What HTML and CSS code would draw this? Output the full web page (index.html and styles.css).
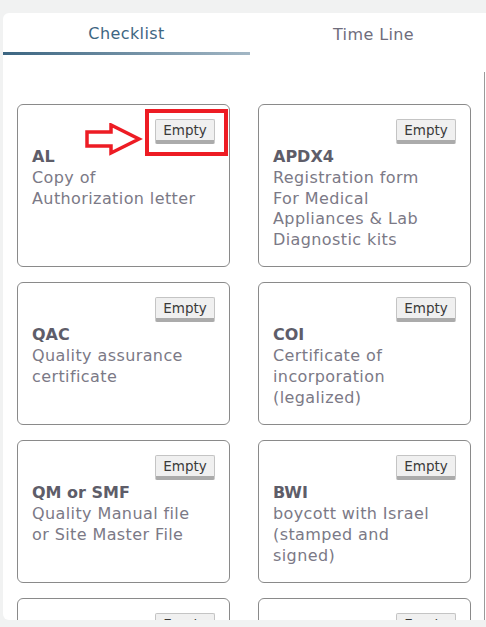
FILE: index.html
```html
<!DOCTYPE html>
<html>
<head>
<meta charset="utf-8">
<link rel="stylesheet" href="styles.css">
</head>
<body>
<div class="panel">
  <div class="tabs">
    <div class="tab active">Checklist</div>
    <div class="tab">Time Line</div>
  </div>
  <div class="scroll">
    <div class="grid">
      <div class="card annotated">
        <div class="btn-row"><span class="btn">Empty</span></div>
        <div class="title">AL</div>
        <div class="desc">Copy of<br>Authorization letter</div>
        <div class="redbox"></div>
        <svg class="arrow" width="58" height="33" viewBox="0 0 58 33"><path d="M2 9 H26 V2 L54 16 L26 30 V23 H2 Z" fill="none" stroke="#ed1c24" stroke-width="3.5" stroke-linejoin="miter"/></svg>
      </div>
      <div class="card">
        <div class="btn-row"><span class="btn">Empty</span></div>
        <div class="title">APDX4</div>
        <div class="desc">Registration form<br>For Medical<br>Appliances &amp; Lab<br>Diagnostic kits</div>
      </div>
      <div class="card">
        <div class="btn-row"><span class="btn">Empty</span></div>
        <div class="title">QAC</div>
        <div class="desc">Quality assurance<br>certificate</div>
      </div>
      <div class="card">
        <div class="btn-row"><span class="btn">Empty</span></div>
        <div class="title">COI</div>
        <div class="desc">Certificate of<br>incorporation<br>(legalized)</div>
      </div>
      <div class="card">
        <div class="btn-row"><span class="btn">Empty</span></div>
        <div class="title">QM or SMF</div>
        <div class="desc">Quality Manual file<br>or Site Master File</div>
      </div>
      <div class="card">
        <div class="btn-row"><span class="btn">Empty</span></div>
        <div class="title">BWI</div>
        <div class="desc">boycott with Israel<br>(stamped and<br>signed)</div>
      </div>
      <div class="card">
        <div class="btn-row"><span class="btn">Empty</span></div>
        <div class="title">MOH</div>
        <div class="desc">Ministry of Health<br>license</div>
      </div>
      <div class="card">
        <div class="btn-row"><span class="btn">Empty</span></div>
        <div class="title">FSC</div>
        <div class="desc">Free Sale<br>Certificate</div>
      </div>
    </div>
  </div>
</div>
</body>
</html>
```
FILE: styles.css
```css
* { box-sizing: border-box; }
html, body { margin: 0; padding: 0; }
body {
  background: #f1f2f2;
  font-family: "DejaVu Sans", sans-serif;
  height: 627px;
  overflow: hidden;
}
.panel {
  margin: 13px 0 0 3px;
  width: 490px;
  height: 607px;
  background: #fff;
  border-radius: 6px 0 0 6px;
  overflow: hidden;
  display: flex;
  flex-direction: column;
}
.tabs {
  display: grid;
  grid-template-columns: 247px 247px;
  height: 42px;
  flex: none;
}
.tab {
  display: flex;
  align-items: center;
  justify-content: center;
  padding-top: 1px;
  font-size: 16px;
  letter-spacing: 0.4px;
  color: #6f6d7c;
}
.tab.active {
  color: #3e6682;
  border-bottom: 3px solid transparent;
  border-image: linear-gradient(to right, #3b6581, #a3b7c5) 1;
}
.scroll {
  margin-top: 17px;
  flex: 1;
  width: 482px;
  border-right: 1px solid #9a9a9a;
  padding: 32px 0 0 14px;
  overflow: hidden;
}
.grid {
  display: grid;
  grid-template-columns: 213px 213px;
  column-gap: 28px;
  row-gap: 15px;
}
.card {
  position: relative;
  border: 1px solid #8a8a8a;
  border-radius: 6px;
  padding: 14px 14px 15.5px 14px;
}
.btn-row {
  display: flex;
  justify-content: flex-end;
  margin-bottom: 3px;
}
.btn {
  display: inline-block;
  height: 25px;
  width: 60px;
  text-align: center;
  font-size: 13.5px;
  line-height: 20px;
  color: #3a3a3a;
  background: #f0f0f0;
  border: 1px solid #c4c4c4;
  border-bottom: 4px solid #ababab;
  border-radius: 2px;
}
.title {
  font-size: 16px;
  font-weight: bold;
  line-height: 20.8px;
  color: #5e5d69;
}
.desc {
  font-size: 16px;
  line-height: 20.8px;
  letter-spacing: 0.4px;
  color: #7b7986;
}
.redbox {
  position: absolute;
  left: 127px;
  top: 4px;
  width: 83px;
  height: 47px;
  border: 4px solid #ed1c24;
}
.arrow {
  position: absolute;
  left: 67px;
  top: 18px;
}
```
